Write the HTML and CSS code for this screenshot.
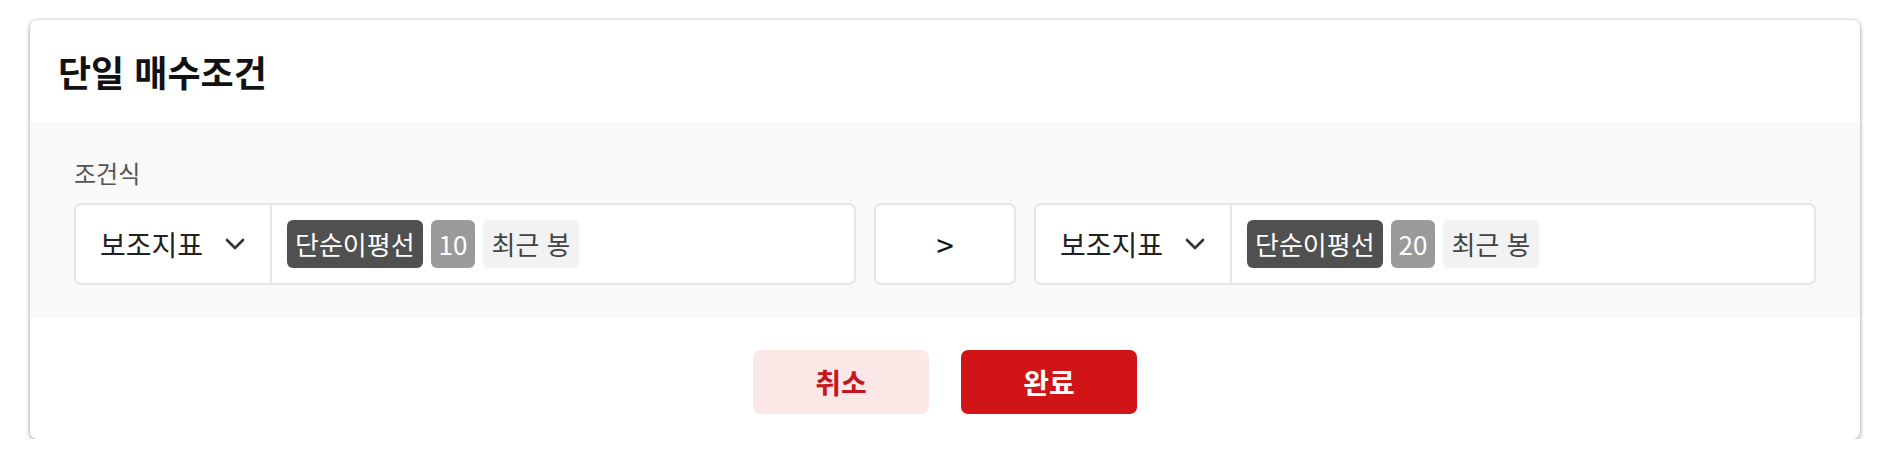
FILE: index.html
```html
<!DOCTYPE html>
<html lang="ko">
<head>
  <meta charset="UTF-8">
  <meta name="viewport" content="width=device-width, initial-scale=1.0">
  <title>단일 매수조건</title>
  <link rel="stylesheet" href="styles.css">
</head>

<body>
  <div class="modal">
    <div class="modal-head">
      <h2 class="title">단일 매수조건</h2>
    </div>

    <div class="modal-body">
      <div class="label">조건식</div>
      <div class="row">
        <!-- 왼쪽 조건 -->
        <div class="field">
          <div class="select">
            <span>보조지표</span>
            <svg class="chevron" width="20" height="12" viewBox="0 0 20 12"><path d="M2 2 L10 10 L18 2" fill="none" stroke="#333" stroke-width="2.6" stroke-linecap="round" stroke-linejoin="round"/></svg>
          </div>
          <div class="tags">
            <span class="tag tag-dark">단순이평선</span>
            <span class="tag tag-gray">10</span>
            <span class="tag tag-light">최근 봉</span>
          </div>
        </div>

        <div class="op">&gt;</div>

        <!-- 오른쪽 조건 -->
        <div class="field">
          <div class="select">
            <span>보조지표</span>
            <svg class="chevron" width="20" height="12" viewBox="0 0 20 12"><path d="M2 2 L10 10 L18 2" fill="none" stroke="#333" stroke-width="2.6" stroke-linecap="round" stroke-linejoin="round"/></svg>
          </div>
          <div class="tags">
            <span class="tag tag-dark">단순이평선</span>
            <span class="tag tag-gray">20</span>
            <span class="tag tag-light">최근 봉</span>
          </div>
        </div>
      </div>
    </div>

    <div class="modal-foot">
      <button class="btn btn-cancel">취소</button>
      <button class="btn btn-ok">완료</button>
    </div>
  </div>
</body>
</html>
```

FILE: styles.css
```css
body {
  margin: 0;
  background-color: #fff;
  font-family: "Noto Sans CJK KR", "Noto Sans", sans-serif;
  color: #222;
}
.modal {
  width: 1830px;
  margin: 20px 0 0 30px;
  background-color: #fff;
  border-radius: 7px;
  box-shadow: 0 1px 4px rgba(0, 0, 0, 0.45);
  overflow: hidden;
}
.modal-head {
  padding: 28px 28px;
}
.title {
  margin: 0;
  font-size: 36px;
  line-height: 46px;
  font-weight: 700;
  color: #111;
}
.modal-body {
  background-color: #f9f9f9;
  padding: 36px 44px 33px;
}
.label {
  font-size: 24px;
  line-height: 30px;
  color: #555;
  margin-bottom: 15px;
}
.row {
  display: flex;
  gap: 18px;
}
.field {
  flex: 1;
  display: flex;
  height: 82px;
  box-sizing: border-box;
  background-color: #fff;
  border: 2px solid #e6e6e6;
  border-radius: 7px;
}
.select {
  width: 196px;
  box-sizing: border-box;
  display: flex;
  align-items: center;
  justify-content: space-between;
  padding: 0 25px 0 24px;
  border-right: 2px solid #e6e6e6;
  font-size: 28px;
  color: #222;
}
.tags {
  display: flex;
  align-items: center;
  gap: 8px;
  padding-left: 15px;
}
.tag {
  height: 48px;
  line-height: 48px;
  padding: 0 8px;
  border-radius: 6px;
  font-size: 26px;
}
.tag-dark {
  background-color: #505050;
  color: #fff;
}
.tag-gray {
  background-color: #9a9a9a;
  color: #fff;
}
.tag-light {
  background-color: #f2f2f2;
  color: #444;
}
.op {
  width: 142px;
  height: 82px;
  box-sizing: border-box;
  display: flex;
  align-items: center;
  justify-content: center;
  background-color: #fff;
  border: 2px solid #e6e6e6;
  border-radius: 7px;
  font-size: 31px;
  color: #111;
}
.modal-foot {
  display: flex;
  justify-content: center;
  gap: 32px;
  padding: 32px 0 25px;
}
.btn {
  width: 176px;
  height: 64px;
  border: none;
  border-radius: 7px;
  font-family: inherit;
  font-size: 28px;
  font-weight: 700;
}
.btn-cancel {
  background-color: #fde8e8;
  color: #c5161d;
}
.btn-ok {
  background-color: #d01418;
  color: #fff;
}
```
